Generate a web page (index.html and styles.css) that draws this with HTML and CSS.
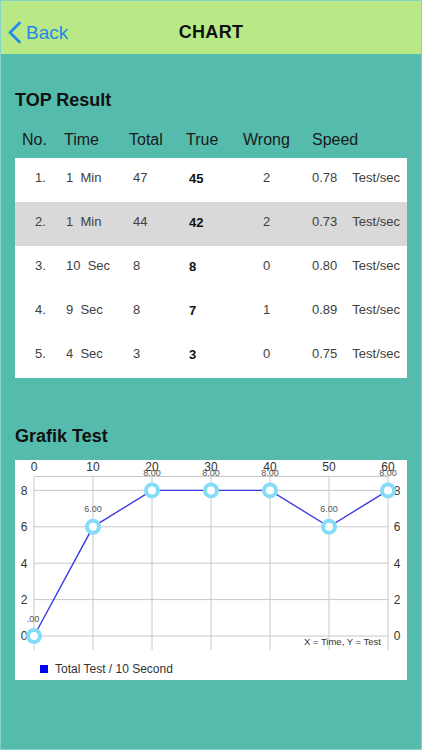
FILE: index.html
```html
<!DOCTYPE html>
<html lang="en">
<head>
  <meta charset="UTF-8" />
  <meta name="viewport" content="width=device-width, initial-scale=1.0"/>
  <title>Chart</title>
  <link rel="stylesheet" href="styles.css">
</head>
<body>
  <div class="screen">
    <header class="navbar">
      <a href="#" class="back">
        <svg width="15" height="23" viewBox="0 0 15 23"><path d="M12.5 2 L3 11.5 L12.5 21" /></svg>
        <span>Back</span>
      </a>
      <div class="nav-title">CHART</div>
      <span></span>
    </header>

    <div class="content">
      <h2 class="section-title">TOP Result</h2>
      <div class="result-head">
        <span>No.</span>
        <span>Time</span>
        <span>Total</span>
        <span>True</span>
        <span>Wrong</span>
        <span>Speed</span>
      </div>
      <div class="result-table">
        <div class="result-row">
          <span>1.</span><span>1  Min</span><span>47</span><b>45</b><span>2</span><span>0.78<i>Test/sec</i></span>
        </div>
        <div class="result-row active">
          <span>2.</span><span>1  Min</span><span>44</span><b>42</b><span>2</span><span>0.73<i>Test/sec</i></span>
        </div>
        <div class="result-row">
          <span>3.</span><span>10  Sec</span><span>8</span><b>8</b><span>0</span><span>0.80<i>Test/sec</i></span>
        </div>
        <div class="result-row">
          <span>4.</span><span>9  Sec</span><span>8</span><b>7</b><span>1</span><span>0.89<i>Test/sec</i></span>
        </div>
        <div class="result-row">
          <span>5.</span><span>4  Sec</span><span>3</span><b>3</b><span>0</span><span>0.75<i>Test/sec</i></span>
        </div>
      </div>

      <h2 class="section-title grafik">Grafik Test</h2>
      <div class="chart-card">
        <svg class="chart" width="392" height="195" viewBox="0 0 392 195">
          <g class="grid">
            <line x1="19" y1="16.5" x2="19" y2="190"/>
            <line x1="78" y1="16.5" x2="78" y2="190"/>
            <line x1="137" y1="16.5" x2="137" y2="190"/>
            <line x1="196" y1="16.5" x2="196" y2="190"/>
            <line x1="255" y1="16.5" x2="255" y2="190"/>
            <line x1="314" y1="16.5" x2="314" y2="190"/>
            <line x1="373" y1="16.5" x2="373" y2="190"/>
            <line x1="19" y1="16.5" x2="373" y2="16.5"/>
            <line x1="19" y1="30.4" x2="373" y2="30.4"/>
            <line x1="19" y1="66.8" x2="373" y2="66.8"/>
            <line x1="19" y1="103.2" x2="373" y2="103.2"/>
            <line x1="19" y1="139.6" x2="373" y2="139.6"/>
            <line x1="19" y1="176" x2="373" y2="176"/>
          </g>
          <g class="axis">
            <text x="19" y="11">0</text>
            <text x="78" y="11">10</text>
            <text x="137" y="11">20</text>
            <text x="196" y="11">30</text>
            <text x="255" y="11">40</text>
            <text x="314" y="11">50</text>
            <text x="373" y="11">60</text>
            <text x="9" y="34.7">8</text>
            <text x="9" y="71.1">6</text>
            <text x="9" y="107.5">4</text>
            <text x="9" y="143.9">2</text>
            <text x="9" y="180.3">0</text>
            <text x="382" y="34.7">8</text>
            <text x="382" y="71.1">6</text>
            <text x="382" y="107.5">4</text>
            <text x="382" y="143.9">2</text>
            <text x="382" y="180.3">0</text>
          </g>
          <polyline class="series" points="19,176 78,66.8 137,30.4 196,30.4 255,30.4 314,66.8 373,30.4"/>
          <g class="dots">
            <circle cx="19" cy="176" r="6"/>
            <circle cx="78" cy="66.8" r="6"/>
            <circle cx="137" cy="30.4" r="6"/>
            <circle cx="196" cy="30.4" r="6"/>
            <circle cx="255" cy="30.4" r="6"/>
            <circle cx="314" cy="66.8" r="6"/>
            <circle cx="373" cy="30.4" r="6"/>
          </g>
          <g class="values">
            <text x="18" y="161.5">.00</text>
            <text x="78" y="52.2">6.00</text>
            <text x="137" y="15.8">8.00</text>
            <text x="196" y="15.8">8.00</text>
            <text x="255" y="15.8">8.00</text>
            <text x="314" y="52.2">6.00</text>
            <text x="373" y="15.8">8.00</text>
          </g>
          <text class="axis-note" x="366" y="184.5">X = Time, Y = Test</text>
        </svg>
        <div class="legend">
          <span class="legend-box"></span>
          <span>Total Test / 10 Second</span>
        </div>
      </div>
    </div>
  </div>
</body>
</html>
```

FILE: styles.css
```css
body {
  margin: 0;
  font-family: "Liberation Sans", Arial, sans-serif;
  background: #55bcad;
}

.screen {
  width: 422px;
  height: 750px;
  box-sizing: border-box;
  border: 1px solid #84d3c8;
  background: #55bcad;
}

.navbar {
  height: 53px;
  box-sizing: border-box;
  padding-top: 10px;
  background-color: #b9e986;
  display: grid;
  grid-template-columns: 1fr auto 1fr;
  align-items: center;
}

.back {
  display: flex;
  align-items: center;
  gap: 4px;
  padding-left: 6px;
  color: #238ae8;
  text-decoration: none;
  font-size: 19px;
}

.back svg path {
  fill: none;
  stroke: #238ae8;
  stroke-width: 2.8;
  stroke-linecap: round;
  stroke-linejoin: round;
}

.nav-title {
  font-size: 18px;
  font-weight: bold;
  color: #111;
  letter-spacing: 0.3px;
}

.content {
  padding: 0 14px;
}

.section-title {
  margin: 36px 0 12px;
  font-size: 18px;
  line-height: 20px;
  font-weight: bold;
  color: #111;
}

.section-title.grafik {
  margin-top: 48px;
  margin-bottom: 14px;
}

.result-head,
.result-row {
  display: grid;
  grid-template-columns: 42px 65px 57px 57px 69px 1fr;
  padding-left: 7px;
  align-items: center;
}

.result-head {
  height: 36px;
  font-size: 16px;
  color: #1a1a1a;
}

.result-table {
  background-color: white;
}

.result-row {
  height: 44px;
  box-sizing: border-box;
  padding-bottom: 6px;
  font-size: 13px;
  color: #404040;
  white-space: pre;
}

.result-row.active {
  background-color: #d9d9d9;
}

.result-row span:nth-child(1) { padding-left: 13px; }
.result-row span:nth-child(2) { padding-left: 2px; }
.result-row span:nth-child(3) { padding-left: 4px; }
.result-row b { padding-left: 3px; color: #111; margin-top: 2px; }
.result-row span:nth-child(5) { padding-left: 20px; }

.result-row i {
  font-style: normal;
  margin-left: 15px;
}

.chart-card {
  background-color: white;
  height: 220px;
}

.chart {
  display: block;
}

.grid line {
  stroke: #c8c8c8;
  stroke-width: 1;
}

.axis text {
  font-size: 12px;
  fill: #333;
  text-anchor: middle;
}

.series {
  fill: none;
  stroke: #3b3be3;
  stroke-width: 1.4;
}

.dots circle {
  fill: white;
  stroke: #84dcf8;
  stroke-width: 4;
}

.values text {
  font-size: 9px;
  fill: #555;
  text-anchor: middle;
}

.axis-note {
  font-size: 9.5px;
  fill: #333;
  text-anchor: end;
}

.legend {
  height: 25px;
  box-sizing: border-box;
  padding: 3px 0 0 25px;
  display: flex;
  align-items: center;
  gap: 7px;
  font-size: 12px;
  color: #333;
}

.legend-box {
  width: 8px;
  height: 8px;
  background-color: #0000ff;
}
```
